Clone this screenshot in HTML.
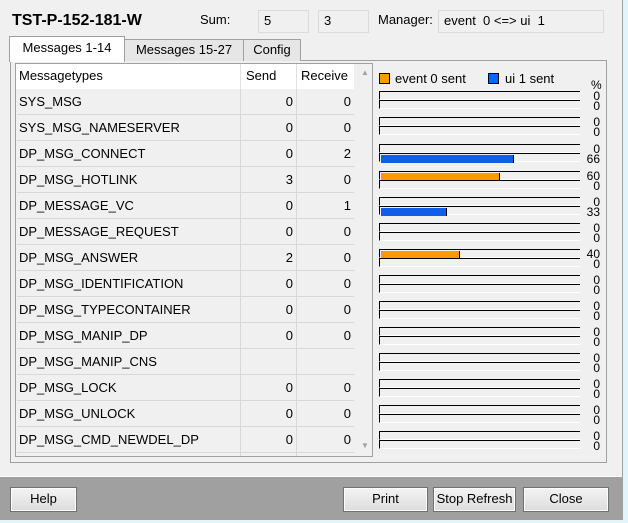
<!DOCTYPE html>
<html><head><meta charset="utf-8"><style>
*{margin:0;padding:0;box-sizing:border-box}
body{width:628px;height:523px;background:#f0f0f0;font-family:"Liberation Sans",sans-serif;font-size:13px;color:#000;position:relative;overflow:hidden}
.a{position:absolute}
.box{position:absolute;background:#f0f0f0;border:1px solid #dcdcdc;padding-left:5px;line-height:20px;font-size:13px}
.tab{position:absolute;border:1px solid #a0a0a0;border-bottom:none;text-align:center;font-size:13px}
.row{position:absolute;left:17px;width:337px;height:26px;border-bottom:1px solid #d8d8d8;line-height:25px}
.row span{position:absolute;top:0}
.n{left:2px}
.s{left:223px;width:56px;height:26px;border-left:1px solid #d8d8d8;text-align:right;padding-right:3px}
.r{left:279px;width:58px;height:26px;border-left:1px solid #d8d8d8;text-align:right;padding-right:3px}
.g{position:absolute;left:379px;width:201px;height:19px}
.g i{position:absolute;left:0;width:201px;height:9px;border-top:1px solid #000;border-left:1px solid #000;border-bottom:1px solid #fff}
.g i:first-child{top:0}.g i:last-child{top:9px}
.g b{position:absolute;left:1px;top:1px;height:8px;border-right:1px solid #000}
.p{position:absolute;left:584px;width:16px;text-align:right;font-size:12px;line-height:10px}
.btn{position:absolute;top:487px;height:25px;border:1px solid #707070;background:linear-gradient(#f4f4f4,#dcdcdc);text-align:center;line-height:22px;font-size:13px;box-shadow:inset 0 0 0 1px #fcfcfc}
</style></head><body>
<div class="a" style="left:12px;top:12px;font-weight:bold;font-size:16px">TST-P-152-181-W</div>
<div class="a" style="left:200px;top:12px">Sum:</div>
<div class="box" style="left:258px;top:10px;width:51px;height:23px">5</div>
<div class="box" style="left:318px;top:10px;width:51px;height:23px">3</div>
<div class="a" style="left:378px;top:12px">Manager:</div>
<div class="box" style="left:438px;top:10px;width:166px;height:23px">event&nbsp; 0 &lt;=&gt; ui&nbsp; 1</div>

<div class="a" style="left:10px;top:60px;width:597px;height:403px;border:1px solid #a0a0a0;background:#f0f0f0"></div>
<div class="tab" style="left:124px;top:39px;width:120px;height:22px;background:#e6e6e6;line-height:20px">Messages 15-27</div>
<div class="tab" style="left:243px;top:39px;width:58px;height:22px;background:#e6e6e6;line-height:20px">Config</div>
<div class="tab" style="left:9px;top:36px;width:116px;height:26px;background:#fff;line-height:22px">Messages 1-14</div>

<div class="a" style="left:15px;top:63px;width:358px;height:394px;border:1px solid #a0a0a0;background:#f0f0f0"></div>
<div class="a" style="left:16px;top:64px;width:338px;height:25px;background:#fff"></div>
<div class="a" style="left:19px;top:68px">Messagetypes</div>
<div class="a" style="left:240px;top:64px;height:25px;border-left:1px solid #e0e0e0"></div>
<div class="a" style="left:246px;top:68px">Send</div>
<div class="a" style="left:296px;top:64px;height:25px;border-left:1px solid #e0e0e0"></div>
<div class="a" style="left:301px;top:68px">Receive</div>
<div class="a" style="left:361px;top:68px;font-size:8px;color:#a0a0a0">▲</div>
<div class="a" style="left:361px;top:441px;font-size:8px;color:#a0a0a0">▼</div>

<div class="row" style="top:89px"><span class="n">SYS_MSG</span><span class="s">0</span><span class="r">0</span></div>
<div class="row" style="top:115px"><span class="n">SYS_MSG_NAMESERVER</span><span class="s">0</span><span class="r">0</span></div>
<div class="row" style="top:141px"><span class="n">DP_MSG_CONNECT</span><span class="s">0</span><span class="r">2</span></div>
<div class="row" style="top:167px"><span class="n">DP_MSG_HOTLINK</span><span class="s">3</span><span class="r">0</span></div>
<div class="row" style="top:193px"><span class="n">DP_MESSAGE_VC</span><span class="s">0</span><span class="r">1</span></div>
<div class="row" style="top:219px"><span class="n">DP_MESSAGE_REQUEST</span><span class="s">0</span><span class="r">0</span></div>
<div class="row" style="top:245px"><span class="n">DP_MSG_ANSWER</span><span class="s">2</span><span class="r">0</span></div>
<div class="row" style="top:271px"><span class="n">DP_MSG_IDENTIFICATION</span><span class="s">0</span><span class="r">0</span></div>
<div class="row" style="top:297px"><span class="n">DP_MSG_TYPECONTAINER</span><span class="s">0</span><span class="r">0</span></div>
<div class="row" style="top:323px"><span class="n">DP_MSG_MANIP_DP</span><span class="s">0</span><span class="r">0</span></div>
<div class="row" style="top:349px"><span class="n">DP_MSG_MANIP_CNS</span><span class="s"></span><span class="r"></span></div>
<div class="row" style="top:375px"><span class="n">DP_MSG_LOCK</span><span class="s">0</span><span class="r">0</span></div>
<div class="row" style="top:401px"><span class="n">DP_MSG_UNLOCK</span><span class="s">0</span><span class="r">0</span></div>
<div class="row" style="top:427px"><span class="n">DP_MSG_CMD_NEWDEL_DP</span><span class="s">0</span><span class="r">0</span></div>
<div class="row" style="top:453px;height:3px;border:none"><span class="s" style="height:3px"></span><span class="r" style="height:3px"></span></div>

<div class="a" style="left:379px;top:73px;width:11px;height:11px;background:#ff9900;border:1px solid #000"></div>
<div class="a" style="left:395px;top:71px">event 0 sent</div>
<div class="a" style="left:488px;top:73px;width:11px;height:11px;background:#0066ff;border:1px solid #000"></div>
<div class="a" style="left:505px;top:71px">ui 1 sent</div>
<div class="a" style="left:591px;top:78px;font-size:12px">%</div>

<div class="g" style="top:91px"><i></i><i></i></div>
<div class="g" style="top:117px"><i></i><i></i></div>
<div class="g" style="top:144px"><i></i><i><b style="width:133px;background:#0f5fe8"></b></i></div>
<div class="g" style="top:171px"><i><b style="width:119px;background:#ff9900"></b></i><i></i></div>
<div class="g" style="top:197px"><i></i><i><b style="width:66px;background:#0f5fe8"></b></i></div>
<div class="g" style="top:223px"><i></i><i></i></div>
<div class="g" style="top:249px"><i><b style="width:79px;background:#ff9900"></b></i><i></i></div>
<div class="g" style="top:275px"><i></i><i></i></div>
<div class="g" style="top:301px"><i></i><i></i></div>
<div class="g" style="top:327px"><i></i><i></i></div>
<div class="g" style="top:353px"><i></i><i></i></div>
<div class="g" style="top:379px"><i></i><i></i></div>
<div class="g" style="top:405px"><i></i><i></i></div>
<div class="g" style="top:431px"><i></i><i></i></div>

<div class="p" style="top:91px">0<br>0</div>
<div class="p" style="top:117px">0<br>0</div>
<div class="p" style="top:144px">0<br>66</div>
<div class="p" style="top:171px">60<br>0</div>
<div class="p" style="top:197px">0<br>33</div>
<div class="p" style="top:223px">0<br>0</div>
<div class="p" style="top:249px">40<br>0</div>
<div class="p" style="top:275px">0<br>0</div>
<div class="p" style="top:301px">0<br>0</div>
<div class="p" style="top:327px">0<br>0</div>
<div class="p" style="top:353px">0<br>0</div>
<div class="p" style="top:379px">0<br>0</div>
<div class="p" style="top:405px">0<br>0</div>
<div class="p" style="top:431px">0<br>0</div>

<div class="a" style="left:0;top:476px;width:622px;height:44px;background:#a0a0a0;border-top:1px solid #fff"></div>
<div class="a" style="left:622px;top:0;width:1px;height:520px;background:#a0a0a0"></div>
<div class="a" style="left:623px;top:0;width:5px;height:523px;background:#e4f4fb"></div>
<div class="a" style="left:0;top:520px;width:628px;height:3px;background:#e4f4fb"></div>
<div class="btn" style="left:10px;width:67px">Help</div>
<div class="btn" style="left:343px;width:85px">Print</div>
<div class="btn" style="left:433px;width:83px">Stop Refresh</div>
<div class="btn" style="left:523px;width:86px">Close</div>
</body></html>
